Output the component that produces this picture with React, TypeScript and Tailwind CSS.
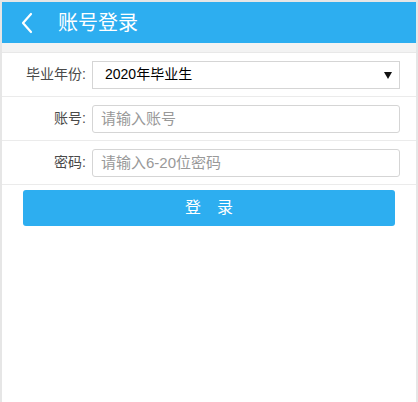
import { useState } from 'react'

const FONT = { fontFamily: '"Liberation Sans", "Noto Sans CJK SC", sans-serif' }

function BackIcon() {
  return (
    <svg width="14" height="22" viewBox="0 0 14 22" fill="none">
      <polyline points="11,2 3,11 11,20" stroke="white" strokeWidth="2.2" strokeLinecap="round" strokeLinejoin="round" />
    </svg>
  )
}

function FormRow({ label, children }: { label: string; children: React.ReactNode }) {
  return (
    <div className="flex h-[44px] items-center border-b border-[#ebebeb] pr-[16px]">
      <label className="w-[84px] shrink-0 text-right text-[14px] text-[#4a4a4a]">{label}:</label>
      <div className="ml-[6px] flex-1">{children}</div>
    </div>
  )
}

export default function App() {
  const [year, setYear] = useState('2020')
  const [account, setAccount] = useState('')
  const [password, setPassword] = useState('')

  return (
    <div className="h-[402px] w-[418px] overflow-hidden border-x-2 border-t-2 border-[#e6e6e6] bg-white" style={FONT}>
      <header className="flex h-[41px] items-center bg-[#2daef0] pl-[18px]">
        <BackIcon />
        <h1 className="ml-[24px] text-[20px] leading-none text-white">账号登录</h1>
      </header>
      <div className="h-[10px] border-b border-[#e8e8e8] bg-[#f3f3f3]" />

      <FormRow label="毕业年份">
        <div className="relative">
          <select
            value={year}
            onChange={(e) => setYear(e.target.value)}
            className="h-[28px] w-full appearance-none border border-[#d5d5d5] bg-white pl-[12px] text-[14px] text-black outline-none"
          >
            <option value="2020">2020年毕业生</option>
            <option value="2021">2021年毕业生</option>
            <option value="2022">2022年毕业生</option>
          </select>
          <svg className="pointer-events-none absolute right-[8px] top-[11px]" width="8" height="7" viewBox="0 0 8 7">
            <polygon points="0,0 8,0 4,7" fill="#111" />
          </svg>
        </div>
      </FormRow>

      <FormRow label="账号">
        <input
          value={account}
          onChange={(e) => setAccount(e.target.value)}
          placeholder="请输入账号"
          className="h-[28px] w-full rounded-[3px] border border-[#d5d5d5] px-[8px] text-[15px] text-[#333] outline-none placeholder:text-[#999]"
        />
      </FormRow>

      <FormRow label="密码">
        <input
          type="password"
          value={password}
          onChange={(e) => setPassword(e.target.value)}
          placeholder="请输入6-20位密码"
          className="h-[28px] w-full rounded-[3px] border border-[#d5d5d5] px-[8px] text-[15px] text-[#333] outline-none placeholder:text-[#999]"
        />
      </FormRow>

      <div className="pl-[21px] pr-[21px] pt-[5px]">
        <button className="h-[36px] w-full rounded-[3px] bg-[#2daef0] text-[16px] text-white">登{'\u3000'}录</button>
      </div>
    </div>
  )
}
